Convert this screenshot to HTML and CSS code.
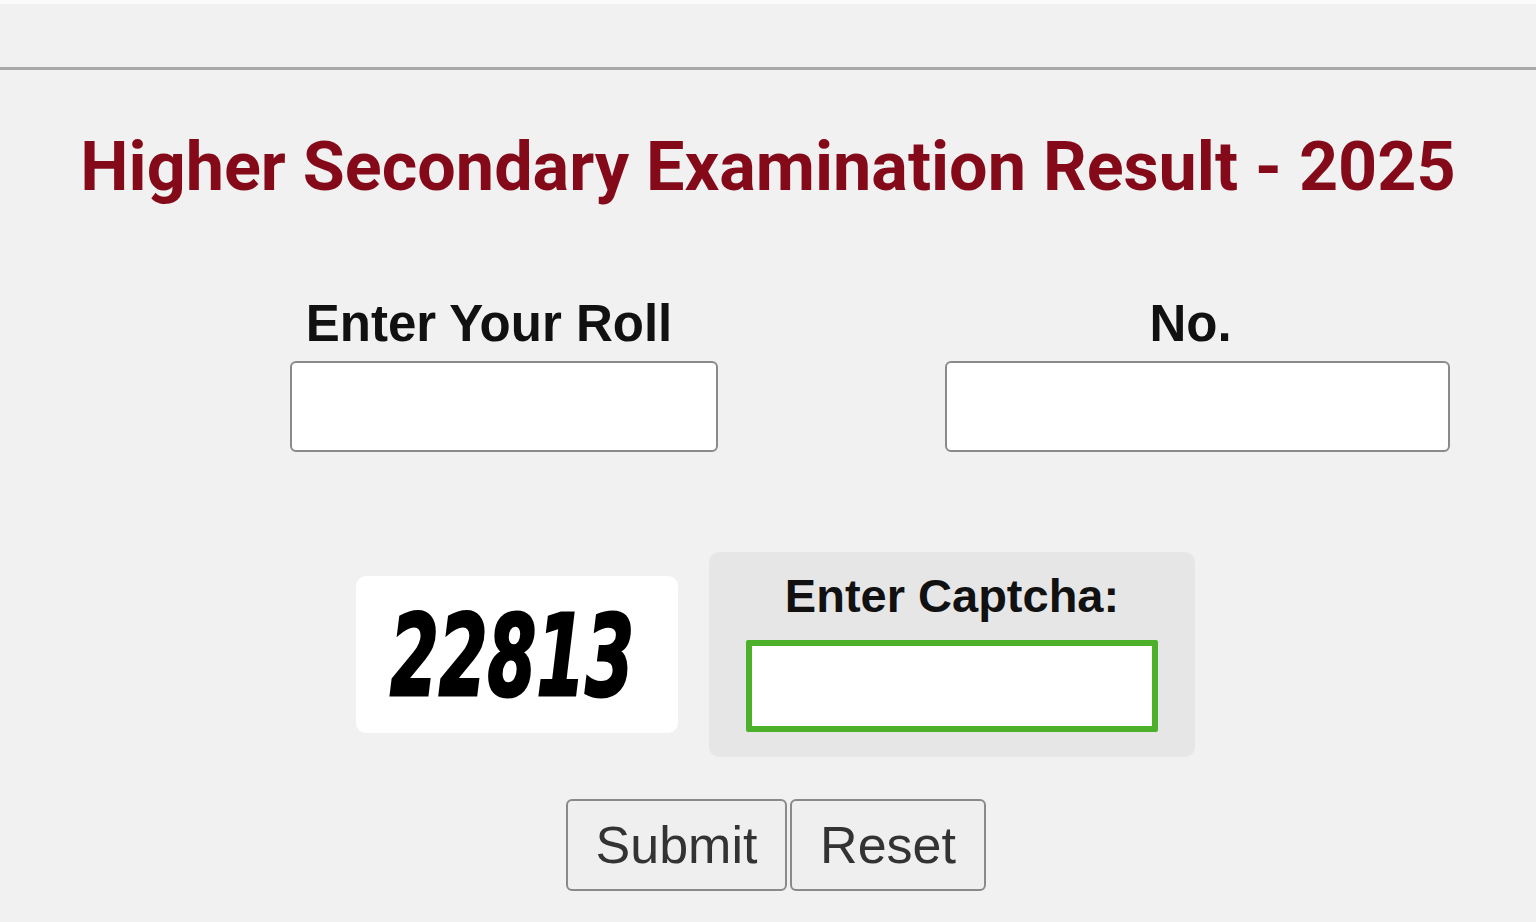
FILE: index.html
```html
<!DOCTYPE html>
<html>
  <head>
    <meta charset="UTF-8" />
    <title>Higher Secondary Examination Result - 2025</title>
    <link rel="stylesheet" href="styles.css">
  </head>

  <body>
    <div class="top-bar"></div>

    <h1 class="result-title">Higher Secondary Examination Result - 2025</h1>

    <div class="roll-row">
      <div class="roll-cell roll-cell-left">
        <label for="roll">Enter Your Roll</label>
        <input id="roll" type="text" />
      </div>
      <div class="roll-cell roll-cell-right">
        <label for="rollno">No.</label>
        <input id="rollno" type="text" />
      </div>
    </div>

    <div class="captcha-row">
      <div class="captcha-image">
        <svg class="captcha-svg" width="280" height="120" viewBox="0 0 280 120">
          <text x="13" y="100" textLength="244" lengthAdjust="spacingAndGlyphs"
            font-family="DejaVu Sans, sans-serif" font-size="112" font-weight="bold"
            font-style="italic" fill="#000" stroke="#000" stroke-width="3">22813</text>
        </svg>
      </div>
      <div class="captcha-panel">
        <label for="captcha">Enter Captcha:</label>
        <input id="captcha" type="text" />
      </div>
    </div>

    <div class="button-row">
      <button class="btn-submit">Submit</button>
      <button class="btn-reset">Reset</button>
    </div>
  </body>
</html>
```

FILE: styles.css
```css
body {
  margin: 0;
  padding: 0;
  background-color: #f1f1f1;
  font-family: "Liberation Sans", Arial, sans-serif;
  border-top: 4px solid #fbfbfb;
  height: 918px;
  overflow: hidden;
}

.top-bar {
  height: 63px;
  border-bottom: 3px solid #a8a8a8;
}

.result-title {
  margin: 56px 0 0 0;
  text-align: center;
  font-family: Roboto, "Liberation Sans", sans-serif;
  font-weight: 700;
  font-size: 68.3px;
  line-height: 82px;
  color: #840a1a;
}

.roll-row {
  display: flex;
  padding-left: 290px;
  gap: 227px;
  margin-top: 87px;
}

.roll-cell {
  display: flex;
  flex-direction: column;
  align-items: center;
}

.roll-cell label {
  font-size: 51px;
  font-weight: bold;
  line-height: 58px;
  color: #111;
  margin-bottom: 8px;
}

.roll-cell-left label {
  padding-right: 30px;
}

.roll-cell-right label {
  padding-right: 14px;
}

.roll-cell input {
  box-sizing: border-box;
  height: 91px;
  background: #fff;
  border: 2px solid #8a8a8a;
  border-radius: 6px;
}

.roll-cell-left input {
  width: 428px;
}

.roll-cell-right input {
  width: 505px;
}

.captcha-row {
  display: flex;
  align-items: center;
  padding-left: 356px;
  gap: 31px;
  margin-top: 100px;
}

.captcha-image {
  width: 322px;
  height: 157px;
  background: #fff;
  border-radius: 10px;
  display: flex;
  align-items: center;
  justify-content: center;
}

.captcha-svg {
  overflow: visible;
}

.captcha-panel {
  box-sizing: border-box;
  width: 486px;
  height: 205px;
  background: #e6e6e6;
  border-radius: 10px;
  display: flex;
  flex-direction: column;
  align-items: center;
  padding-top: 14px;
}

.captcha-panel label {
  font-size: 47px;
  font-weight: bold;
  line-height: 60px;
  color: #111;
  margin-bottom: 14px;
}

.captcha-panel input {
  box-sizing: border-box;
  width: 412px;
  height: 92px;
  background: #fff;
  border: 6px solid #4cb02a;
  border-radius: 2px;
}

.button-row {
  display: flex;
  padding-left: 566px;
  gap: 3px;
  margin-top: 42px;
}

.button-row button {
  height: 92px;
  background: #efefef;
  border: 2px solid #8a8a8a;
  border-radius: 6px;
  font-family: "Liberation Sans", Arial, sans-serif;
  font-size: 52px;
  color: #333;
  cursor: pointer;
}

.btn-submit {
  width: 221px;
}

.btn-reset {
  width: 196px;
}
```
